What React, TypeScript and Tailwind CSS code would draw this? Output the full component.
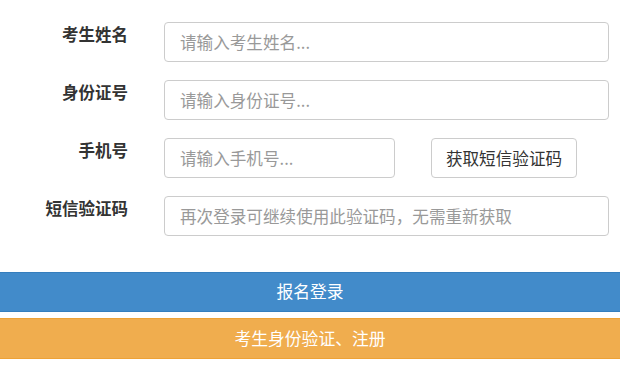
import React from "react";

const font = { fontFamily: '"Noto Sans CJK SC", "Noto Sans", sans-serif' };

function Label({ children }: { children: React.ReactNode }) {
  return (
    <div className="w-[128px] shrink-0 pt-[2px] text-right text-[16.5px] leading-[20px] font-bold text-[#333]">
      {children}
    </div>
  );
}

const inputCls =
  "h-[40px] rounded-[4px] border border-[#ccc] bg-white px-[15px] text-[16.6px] text-[#555] outline-none placeholder:text-[#999]";

export default function App() {
  return (
    <div className="w-[620px] h-[373px] bg-white overflow-hidden" style={font}>
      <div className="flex flex-col gap-[18px] pt-[22px] pr-[11px]">
        <div className="flex gap-[36px]">
          <Label>考生姓名</Label>
          <input className={inputCls + " flex-1 min-w-0"} placeholder="请输入考生姓名..." />
        </div>
        <div className="flex gap-[36px]">
          <Label>身份证号</Label>
          <input className={inputCls + " flex-1 min-w-0"} placeholder="请输入身份证号..." />
        </div>
        <div className="flex gap-[36px]">
          <Label>手机号</Label>
          <input className={inputCls + " w-[231px]"} placeholder="请输入手机号..." />
          <button className="h-[40px] w-[146px] rounded-[4px] border border-[#ccc] bg-white text-[16.6px] text-[#333]">
            获取短信验证码
          </button>
        </div>
        <div className="flex gap-[36px]">
          <Label>短信验证码</Label>
          <input
            className={inputCls + " flex-1 min-w-0"}
            placeholder="再次登录可继续使用此验证码，无需重新获取"
          />
        </div>
      </div>
      <div className="mt-[36px] flex flex-col gap-[6px]">
        <button className="h-[40px] w-full border-y border-[#357ebd] bg-[#428bca] text-[16.8px] text-white">
          报名登录
        </button>
        <button className="h-[41px] w-full border-y border-[#eea236] bg-[#f0ad4e] text-[16.8px] text-white">
          考生身份验证、注册
        </button>
      </div>
    </div>
  );
}
